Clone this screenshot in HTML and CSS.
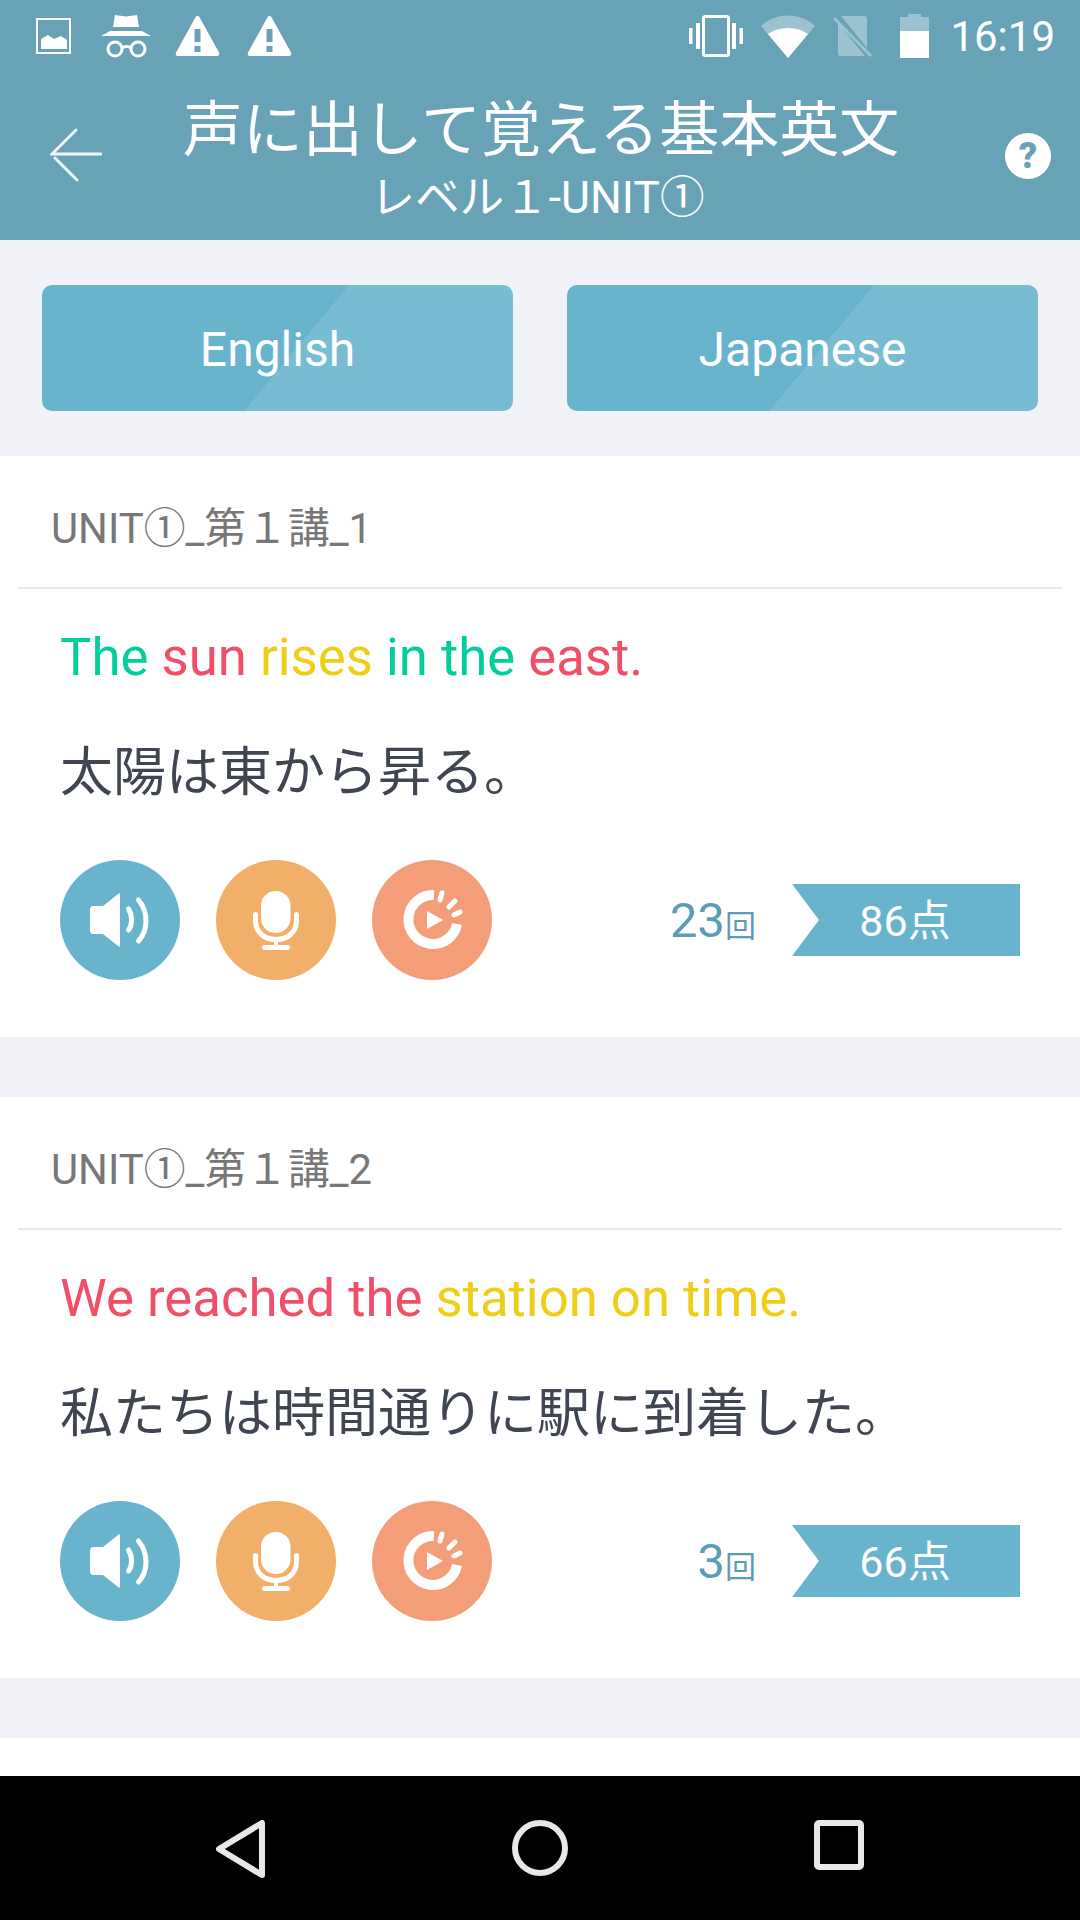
FILE: index.html
```html
<!DOCTYPE html>
<html lang="ja">
<head>
    <meta charset="UTF-8">
    <meta name="viewport" content="width=device-width, initial-scale=1.0">
    <title>声に出して覚える基本英文</title>
    <link rel="stylesheet" href="styles.css">
</head>
<body>
    <svg class="defs" width="0" height="0">
        <symbol id="warn" viewBox="0 0 44 40">
            <path fill="#fff" fill-rule="evenodd" d="M22 0c1 0 1.600.5 2 1.200L43.500 36.500c.8 1.600 0 3.500-1.500 3.500H2c-1.500 0-2.300-1.900-1.500-3.500L20 1.200C20.400.5 21 0 22 0zM19 13v13h6V13zM19 30v6h6v-6z"/>
        </symbol>
        <symbol id="sound" viewBox="0 0 120 120">
            <path fill="#fff" d="M30 50c0-2 1-4 3-4h10l15-12c1-1 2-1 2 1v50c0 2-1 2-2 1L43 74H33c-2 0-3-2-3-4z"/>
            <path fill="none" stroke="#fff" stroke-width="5" stroke-linecap="round" d="M68.500 49c4 6 4 16 0 21"/>
            <path fill="none" stroke="#fff" stroke-width="5" stroke-linecap="round" d="M78.500 40c10 12 10 30 0 41"/>
        </symbol>
        <symbol id="mic" viewBox="0 0 120 120">
            <rect x="45" y="31" width="29.500" height="42" rx="14.700" fill="#fff"/>
            <path fill="none" stroke="#fff" stroke-width="5" stroke-linecap="round" d="M39.500 54.500v6c0 12 9 19 20.500 19s20.500-7 20.500-19v-6"/>
            <path fill="none" stroke="#fff" stroke-width="4" d="M60 80v7"/>
            <path fill="none" stroke="#fff" stroke-width="5" stroke-linecap="round" d="M48.500 87.500h23"/>
        </symbol>
        <symbol id="replay" viewBox="0 0 120 120">
            <path fill="none" stroke="#fff" stroke-width="10" d="M62 35A24.500 24.500 0 1 0 85 64"/>
            <path fill="#fff" d="M55 51l16 9-16 9z"/>
            <path fill="none" stroke="#fff" stroke-width="5" stroke-linecap="round" d="M70 33l-2 7M83 41l-6 6M88 52l-6 3"/>
        </symbol>
    </svg>

    <header class="app-header">
        <div class="status-bar">
            <div class="status-left">
                <svg width="35" height="36" viewBox="0 0 35 36"><rect x="1" y="1" width="33" height="34" fill="none" stroke="#fff" stroke-width="2"/><path fill="#fff" d="M5 31V21l7-4 6 4 7-3 6 4v9z"/></svg>
                <svg width="50" height="44" viewBox="0 0 50 44"><path fill="#fff" d="M12 13L14 1l11 1.500L36 1l2 12zM9 17h32l9 5H0z"/><g fill="none" stroke="#fff" stroke-width="3"><circle cx="14" cy="35" r="7"/><circle cx="37" cy="35" r="7"/><path d="M21 34c2-2 7-2 9 0"/></g></svg>
                <svg class="warn-icon"><use href="#warn"/></svg>
                <svg class="warn-icon"><use href="#warn"/></svg>
            </div>
            <div class="status-right">
                <svg width="54" height="42" viewBox="0 0 54 42"><rect x="14.500" y="1.500" width="25" height="39" rx="2" fill="none" stroke="#fff" stroke-width="3"/><path fill="#fff" d="M0 13h3.500v16H0zM7 8h4v26H7zM43 8h4v26h-4zM50.500 13H54v16h-3.500z"/></svg>
                <svg width="54" height="43" viewBox="0 0 54 43"><path fill="#fff" fill-opacity=".35" d="M0 11C15-3 39-3 54 11L27 43z"/><path fill="#fff" d="M7 19c11-8 29-8 40 0L27 43z"/></svg>
                <svg width="40" height="42" viewBox="0 0 40 42"><path fill="#fff" fill-opacity=".35" d="M5 8v31c0 1 1 2 2 2h25L5 8zM9 1h22c2 0 3 1 3 3v29L8 1z"/><path stroke="#fff" stroke-opacity=".35" stroke-width="3" d="M1 3l37 38"/></svg>
                <svg width="29" height="44" viewBox="0 0 29 44"><path fill="#fff" fill-opacity=".35" d="M8 0h13v3h8v14H0V3h8z"/><path fill="#fff" d="M0 17h29v27H0z"/></svg>
                <span class="clock">16:19</span>
            </div>
        </div>
        <div class="title-bar">
            <svg class="back-icon" width="52" height="54" viewBox="0 0 52 54"><path fill="none" stroke="#fff" stroke-opacity=".9" stroke-width="3" stroke-linecap="round" d="M26 2L2 26h49M5 30l22 22"/></svg>
            <div class="title-text">
                <h1>声に出して覚える基本英文</h1>
                <p>レベル１-UNIT①</p>
            </div>
            <span class="help-icon">?</span>
        </div>
    </header>

    <div class="lang-tabs">
        <button class="lang-btn">English</button>
        <button class="lang-btn">Japanese</button>
    </div>

    <section class="card">
        <h2 class="card-label">UNIT①_第１講_1</h2>
        <p class="english"><span class="green">The</span> <span class="red">sun</span> <span class="yellow">rises</span> <span class="green">in the</span> <span class="red">east.</span></p>
        <p class="japanese">太陽は東から昇る。</p>
        <div class="card-foot">
            <span class="round-btn blue"><svg><use href="#sound"/></svg></span>
            <span class="round-btn orange"><svg><use href="#mic"/></svg></span>
            <span class="round-btn salmon"><svg><use href="#replay"/></svg></span>
            <span class="count">23<small>回</small></span>
            <span class="score">86点</span>
        </div>
    </section>

    <section class="card">
        <h2 class="card-label">UNIT①_第１講_2</h2>
        <p class="english"><span class="red">We reached the</span> <span class="yellow">station on time.</span></p>
        <p class="japanese">私たちは時間通りに駅に到着した。</p>
        <div class="card-foot">
            <span class="round-btn blue"><svg><use href="#sound"/></svg></span>
            <span class="round-btn orange"><svg><use href="#mic"/></svg></span>
            <span class="round-btn salmon"><svg><use href="#replay"/></svg></span>
            <span class="count">3<small>回</small></span>
            <span class="score">66点</span>
        </div>
    </section>

    <div class="card-peek"></div>

    <nav class="nav-bar">
        <svg width="50" height="58" viewBox="0 0 50 58"><path fill="none" stroke="#e8e8e8" stroke-width="6" stroke-linejoin="round" d="M46 3v52L3 29z"/></svg>
        <svg width="56" height="56" viewBox="0 0 56 56"><circle cx="28" cy="28" r="25" fill="none" stroke="#e8e8e8" stroke-width="6"/></svg>
        <svg width="50" height="50" viewBox="0 0 50 50"><rect x="3" y="3" width="44" height="44" rx="2" fill="none" stroke="#e8e8e8" stroke-width="6"/></svg>
    </nav>
</body>
</html>
```

FILE: styles.css
```css
* {
    box-sizing: border-box;
}
body {
    width: 1080px;
    height: 1920px;
    margin: 0;
    overflow: hidden;
    display: flex;
    flex-direction: column;
    font-family: Roboto, "Noto Sans CJK JP", sans-serif;
    background-color: #f0f2f7;
    color: #3f4652;
}
.defs {
    position: absolute;
}

/* header */
.app-header {
    height: 240px;
    background-color: #68a2b6;
    color: #fff;
}
.status-bar {
    height: 72px;
    padding: 0 25px 0 36px;
    display: flex;
    justify-content: space-between;
    align-items: center;
}
.status-left,
.status-right {
    display: flex;
    align-items: center;
}
.status-left svg:nth-child(1) {
    margin-right: 30px;
}
.status-left svg:nth-child(2) {
    margin-right: 24px;
}
.status-left svg:nth-child(3) {
    margin-right: 27px;
}
.warn-icon {
    width: 45px;
    height: 40px;
}
.status-right svg {
    margin-right: 18px;
}
.status-right svg:nth-child(3) {
    margin-right: 27px;
}
.status-right svg:nth-child(4) {
    margin-right: 21px;
}
.clock {
    font-size: 42px;
    white-space: nowrap;
}
.title-bar {
    height: 168px;
    padding: 0 29px;
    display: grid;
    grid-template-columns: 1fr auto 1fr;
    align-items: start;
}
.back-icon {
    margin: 56px 0 0 21px;
}
.title-text {
    padding-left: 2px;
    text-align: center;
    white-space: nowrap;
}
.title-text h1 {
    margin: 21px 0 0;
    font-size: 60px;
    line-height: 76px;
    font-weight: 400;
}
.title-text p {
    margin: 1px 0 0;
    padding-right: 7px;
    font-size: 44.6px;
    line-height: 56px;
    font-weight: 400;
}
.help-icon {
    justify-self: end;
    width: 46px;
    height: 46px;
    margin-top: 61px;
    border-radius: 50%;
    background-color: #fff;
    color: #68a2b6;
    font-size: 36px;
    line-height: 46px;
    font-weight: 900;
    text-align: center;
}

/* tabs */
.lang-tabs {
    height: 216px;
    padding: 45px 42px;
    display: flex;
    justify-content: space-between;
}
.lang-btn {
    width: 471px;
    height: 126px;
    padding: 2px 0 0;
    border: none;
    border-radius: 10px;
    font-family: inherit;
    font-size: 48px;
    color: #fff;
    background: linear-gradient(129.8deg, #69b4cd 236px, #78bcd3 236px);
}

/* cards */
.card {
    height: 581px;
    margin-bottom: 60px;
    padding: 0 18px;
    background-color: #fff;
}
.card-label {
    height: 133px;
    margin: 0;
    padding: 46px 0 0 33px;
    border-bottom: 2px solid #e8e8ea;
    font-size: 41.8px;
    line-height: 54px;
    font-weight: 400;
    color: #777;
}
.english {
    margin: 38px 0 0 42px;
    font-size: 52.7px;
    line-height: 60px;
}
.green {
    color: #00cf9c;
}
.red {
    color: #f05067;
}
.yellow {
    color: #efce1a;
}
.japanese {
    margin: 50px 0 0 42px;
    font-size: 53px;
    line-height: 72px;
}
.card-foot {
    margin: 51px 0 0 42px;
    display: flex;
    align-items: center;
    gap: 36px;
}
.round-btn {
    width: 120px;
    height: 120px;
    border-radius: 50%;
}
.round-btn svg {
    display: block;
    width: 120px;
    height: 120px;
}
.blue {
    background-color: #69b4cd;
}
.orange {
    background-color: #f2af69;
}
.salmon {
    background-color: #f49e79;
}
.count {
    margin-left: auto;
    font-size: 49px;
    color: #5b9db3;
}
.count small {
    font-size: 31px;
}
.score {
    width: 228px;
    height: 72px;
    margin-right: 42px;
    padding-right: 2px;
    font-size: 43px;
    line-height: 74px;
    text-align: center;
    color: #fff;
    background-color: #69b4cd;
    clip-path: polygon(0 0, 100% 0, 100% 100%, 0 100%, 27px 50%);
}
.card-peek {
    flex: 1;
    background-color: #fff;
}
.nav-bar {
    height: 144px;
    padding: 44px 216px 0;
    display: flex;
    justify-content: space-between;
    align-items: flex-start;
    background-color: #000;
}
```
